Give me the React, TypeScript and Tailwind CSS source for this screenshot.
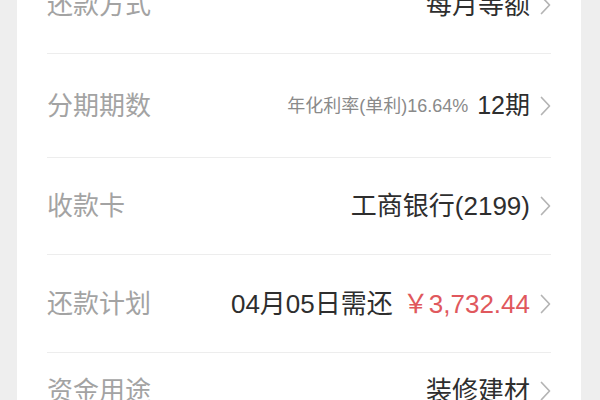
import React from "react";

const Chevron = () => (
  <svg width="11" height="20" viewBox="0 0 11 20" className="shrink-0 ml-[10px]">
    <path d="M1.5 1.5 L9.5 10 L1.5 18.5" fill="none" stroke="#b4b4b4" strokeWidth="1.7" strokeLinecap="round" strokeLinejoin="round" />
  </svg>
);

type RowProps = { label: string; h: string; children: React.ReactNode; last?: boolean };

const Row = ({ label, h, children, last }: RowProps) => (
  <div className={`flex items-center justify-between ${h} ${last ? "" : "border-b border-[#ededed]"}`}>
    <span className="text-[26px] text-[#a3a3a3] leading-none">{label}</span>
    <div className="flex items-center">
      {children}
      <Chevron />
    </div>
  </div>
);

export default function App() {
  return (
    <div
      className="w-[600px] h-[400px] overflow-hidden bg-[#eeeeee] pl-[17px] pr-[19px]"
      style={{ fontFamily: '"Liberation Sans", "Noto Sans CJK SC", sans-serif' }}
    >
      <div className="bg-white px-[30px] -mt-[44px] pb-[40px]">
        <Row label="还款方式" h="h-[98px]">
          <span className="text-[26px] text-[#2e2e2e] leading-none">每月等额</span>
        </Row>
        <Row label="分期期数" h="h-[104px]">
          <span className="text-[18px] text-[#8a8a8a] leading-none mr-[9px]">年化利率(单利)16.64%</span>
          <span className="text-[25px] text-[#2e2e2e] leading-none">12期</span>
        </Row>
        <Row label="收款卡" h="h-[97px]">
          <span className="text-[26px] text-[#2e2e2e] leading-none">工商银行(2199)</span>
        </Row>
        <Row label="还款计划" h="h-[98px]">
          <span className="text-[26px] text-[#2e2e2e] leading-none">04月05日需还</span>
          <span className="text-[26px] text-[#e0585d] leading-none ml-[10px]">￥3,732.44</span>
        </Row>
        <Row label="资金用途" h="h-[76px]" last>
          <span className="text-[26px] text-[#2e2e2e] leading-none">装修建材</span>
        </Row>
      </div>
    </div>
  );
}
